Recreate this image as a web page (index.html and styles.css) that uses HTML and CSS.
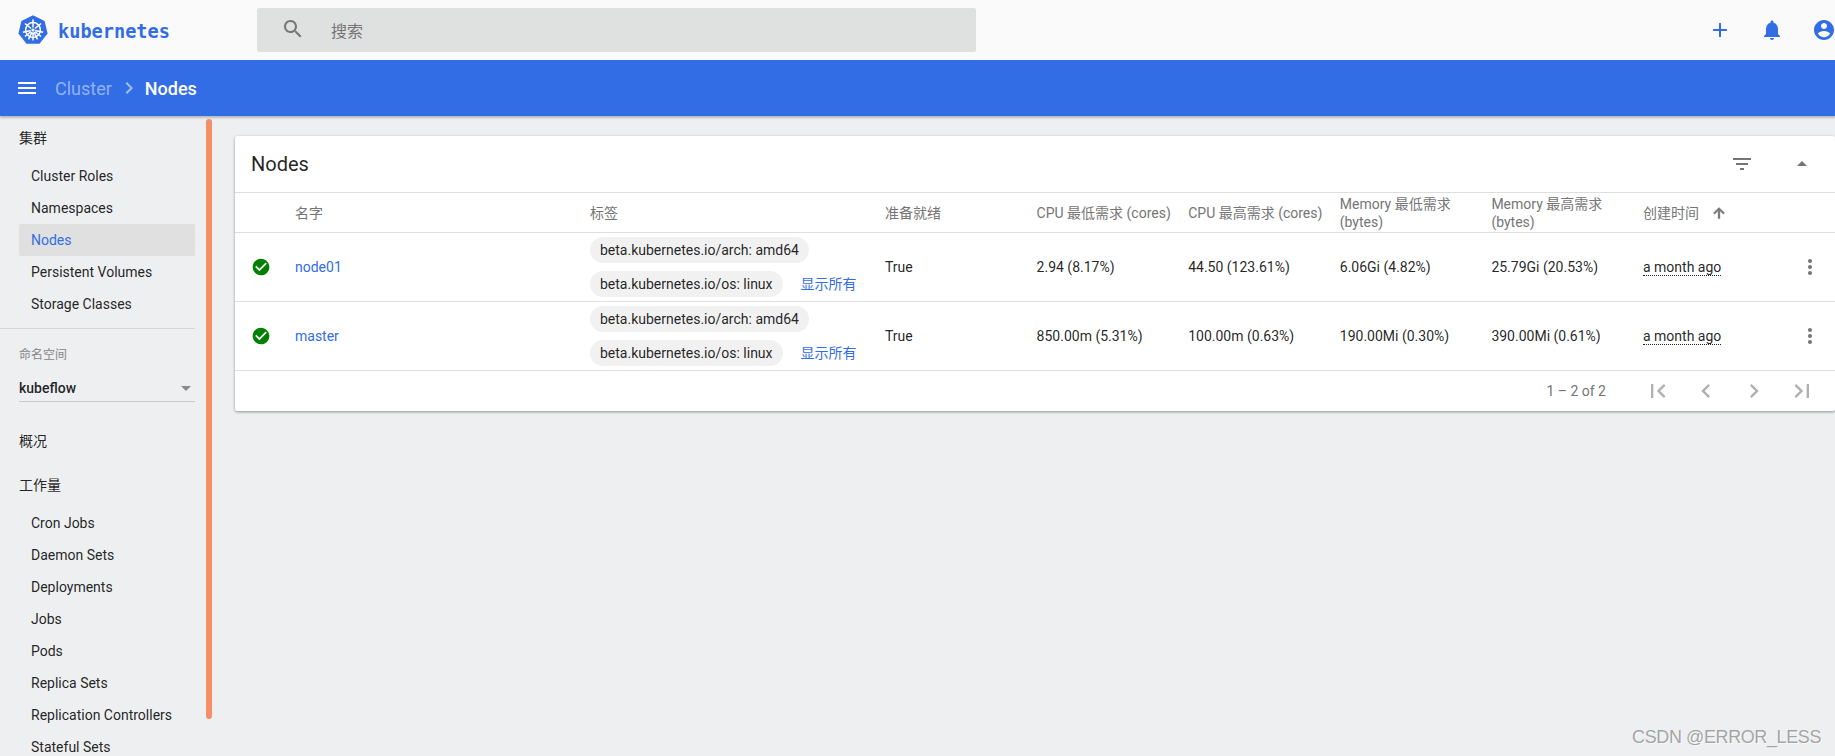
FILE: index.html
```html
<!DOCTYPE html>
<html lang="zh">
<head>
<meta charset="utf-8">
<title>Nodes - Kubernetes Dashboard</title>
<link rel="stylesheet" href="styles.css">
</head>
<body>
<header class="toolbar">
  <div class="brand">
    <svg class="logo" viewBox="0 0 30 30">
      <path class="logo-hept" d="M15 .3 26.6 5.9 29.6 18.5 21.5 28.8H8.5L.4 18.5 3.4 5.9Z"/>
      <g class="logo-wheel">
        <circle cx="15" cy="15" r="7.4"/>
        <path d="M15 4.6V12.6M15 17.4V25.4M6.9 8.5 13.1 13.5M16.9 16.5 23.1 21.5M23.1 8.5 16.9 13.5M13.1 16.5 6.9 21.5M4.9 17.3 12.7 15.5M17.3 15.5 25.1 17.3M10.5 24.4 14 17.2M16 17.2 19.5 24.4"/>
        <circle class="logo-hub" cx="15" cy="15" r="1.6"/>
      </g>
    </svg>
    <span class="brand-name">kubernetes</span>
  </div>
  <div class="search">
    <svg class="icon icon-search" viewBox="0 0 24 24"><path d="M15.5 14h-.79l-.28-.27C15.41 12.59 16 11.11 16 9.5 16 5.91 13.09 3 9.5 3S3 5.91 3 9.5 5.91 16 9.5 16c1.61 0 3.09-.59 4.23-1.57l.27.28v.79l5 4.99L20.49 19l-4.99-5zm-6 0C7.01 14 5 11.99 5 9.5S7.01 5 9.5 5 14 7.01 14 9.5 11.99 14 9.5 14z"/></svg>
    <span class="search-text">搜索</span>
  </div>
  <div class="actions">
    <svg class="icon" viewBox="0 0 24 24"><path d="M19 13h-6v6h-2v-6H5v-2h6V5h2v6h6v2z"/></svg>
    <svg class="icon" viewBox="0 0 24 24"><path d="M12 22c1.1 0 2-.9 2-2h-4c0 1.1.89 2 2 2zm6-6v-5c0-3.07-1.64-5.64-4.5-6.32V4c0-.83-.67-1.5-1.5-1.5s-1.5.67-1.5 1.5v.68C7.63 5.36 6 7.92 6 11v5l-2 2v1h16v-1l-2-2z"/></svg>
    <svg class="icon" viewBox="0 0 24 24"><path d="M12 2C6.48 2 2 6.48 2 12s4.48 10 10 10 10-4.48 10-10S17.52 2 12 2zm0 3c1.66 0 3 1.34 3 3s-1.34 3-3 3-3-1.34-3-3 1.34-3 3-3zm0 14.2c-2.5 0-4.71-1.28-6-3.22.03-1.99 4-3.08 6-3.08 1.99 0 5.97 1.09 6 3.08-1.29 1.94-3.5 3.22-6 3.22z"/></svg>
  </div>
</header>

<div class="crumbbar">
  <svg class="icon icon-menu" viewBox="0 0 24 24"><path d="M3 18h18v-2H3v2zm0-5h18v-2H3v2zm0-7v2h18V6H3z"/></svg>
  <span class="crumb-parent">Cluster</span>
  <svg class="icon icon-chevron" viewBox="0 0 24 24"><path d="M10 6L8.59 7.41 13.17 12l-4.58 4.59L10 18l6-6z"/></svg>
  <span class="crumb-current">Nodes</span>
</div>

<div class="main">
  <nav class="sidebar">
    <div class="scrollthumb"></div>
    <div class="nav-title">集群</div>
    <a class="nav-item">Cluster Roles</a>
    <a class="nav-item">Namespaces</a>
    <a class="nav-item nav-active">Nodes</a>
    <a class="nav-item">Persistent Volumes</a>
    <a class="nav-item">Storage Classes</a>
    <div class="nav-divider"></div>
    <div class="ns-label">命名空间</div>
    <div class="ns-select">
      <span>kubeflow</span>
      <span class="ns-caret"></span>
    </div>
    <div class="nav-title">概况</div>
    <div class="nav-title">工作量</div>
    <a class="nav-item">Cron Jobs</a>
    <a class="nav-item">Daemon Sets</a>
    <a class="nav-item">Deployments</a>
    <a class="nav-item">Jobs</a>
    <a class="nav-item">Pods</a>
    <a class="nav-item">Replica Sets</a>
    <a class="nav-item">Replication Controllers</a>
    <a class="nav-item">Stateful Sets</a>
  </nav>

  <main class="content">
    <section class="card">
      <div class="card-head">
        <h1 class="card-title">Nodes</h1>
        <svg class="icon icon-grey" viewBox="0 0 24 24"><path d="M10 18h4v-2h-4v2zM3 6v2h18V6H3zm3 7h12v-2H6v2z"/></svg>
        <svg class="icon icon-grey icon-collapse" viewBox="0 0 24 24"><path d="M7 14l5-5 5 5z"/></svg>
      </div>
      <table class="table">
        <colgroup>
          <col class="c-status"><col class="c-wide"><col class="c-wide">
          <col class="c-num"><col class="c-num"><col class="c-num"><col class="c-num"><col class="c-num">
          <col class="c-age"><col>
        </colgroup>
        <thead>
          <tr>
            <th></th>
            <th>名字</th>
            <th>标签</th>
            <th>准备就绪</th>
            <th>CPU 最低需求 (cores)</th>
            <th>CPU 最高需求 (cores)</th>
            <th>Memory 最低需求 (bytes)</th>
            <th>Memory 最高需求 (bytes)</th>
            <th colspan="2">
              <span class="sorted">创建时间
                <svg class="icon-sort" viewBox="0 0 24 24"><path d="M4 12l1.41 1.41L11 7.83V20h2V7.83l5.58 5.59L20 12l-8-8-8 8z"/></svg>
              </span>
            </th>
          </tr>
        </thead>
        <tbody>
          <tr>
            <td class="cell-status"><svg class="icon-ok" viewBox="0 0 24 24"><circle class="ok-bg" cx="12" cy="12" r="7"/><path d="M12 2C6.48 2 2 6.48 2 12s4.48 10 10 10 10-4.48 10-10S17.52 2 12 2zm-2 15l-5-5 1.41-1.41L10 14.17l7.59-7.59L19 8l-9 9z"/></svg></td>
            <td><a class="link">node01</a></td>
            <td>
              <div class="chips">
                <span class="chip">beta.kubernetes.io/arch: amd64</span>
                <div class="chip-row"><span class="chip">beta.kubernetes.io/os: linux</span><a class="link link-more">显示所有</a></div>
              </div>
            </td>
            <td>True</td>
            <td>2.94 (8.17%)</td>
            <td>44.50 (123.61%)</td>
            <td>6.06Gi (4.82%)</td>
            <td>25.79Gi (20.53%)</td>
            <td><span class="age">a month ago</span></td>
            <td class="cell-more"><svg class="icon icon-grey" viewBox="0 0 24 24"><path d="M12 8c1.1 0 2-.9 2-2s-.9-2-2-2-2 .9-2 2 .9 2 2 2zm0 2c-1.1 0-2 .9-2 2s.9 2 2 2 2-.9 2-2-.9-2-2-2zm0 6c-1.1 0-2 .9-2 2s.9 2 2 2 2-.9 2-2-.9-2-2-2z"/></svg></td>
          </tr>
          <tr>
            <td class="cell-status"><svg class="icon-ok" viewBox="0 0 24 24"><circle class="ok-bg" cx="12" cy="12" r="7"/><path d="M12 2C6.48 2 2 6.48 2 12s4.48 10 10 10 10-4.48 10-10S17.52 2 12 2zm-2 15l-5-5 1.41-1.41L10 14.17l7.59-7.59L19 8l-9 9z"/></svg></td>
            <td><a class="link">master</a></td>
            <td>
              <div class="chips">
                <span class="chip">beta.kubernetes.io/arch: amd64</span>
                <div class="chip-row"><span class="chip">beta.kubernetes.io/os: linux</span><a class="link link-more">显示所有</a></div>
              </div>
            </td>
            <td>True</td>
            <td>850.00m (5.31%)</td>
            <td>100.00m (0.63%)</td>
            <td>190.00Mi (0.30%)</td>
            <td>390.00Mi (0.61%)</td>
            <td><span class="age">a month ago</span></td>
            <td class="cell-more"><svg class="icon icon-grey" viewBox="0 0 24 24"><path d="M12 8c1.1 0 2-.9 2-2s-.9-2-2-2-2 .9-2 2 .9 2 2 2zm0 2c-1.1 0-2 .9-2 2s.9 2 2 2 2-.9 2-2-.9-2-2-2zm0 6c-1.1 0-2 .9-2 2s.9 2 2 2 2-.9 2-2-.9-2-2-2z"/></svg></td>
          </tr>
        </tbody>
      </table>
      <div class="pager">
        <span class="pager-range">1 – 2 of 2</span>
        <span class="pager-btn"><svg class="icon icon-pager" viewBox="0 0 24 24"><path d="M18.41 16.59L13.82 12l4.59-4.59L17 6l-6 6 6 6zM6 6h2v12H6z"/></svg></span>
        <span class="pager-btn"><svg class="icon icon-pager" viewBox="0 0 24 24"><path d="M15.41 7.41L14 6l-6 6 6 6 1.41-1.41L10.83 12z"/></svg></span>
        <span class="pager-btn"><svg class="icon icon-pager" viewBox="0 0 24 24"><path d="M10 6L8.59 7.41 13.17 12l-4.58 4.59L10 18l6-6z"/></svg></span>
        <span class="pager-btn"><svg class="icon icon-pager" viewBox="0 0 24 24"><path d="M5.59 7.41L10.18 12l-4.59 4.59L7 18l6-6-6-6zM16 6h2v12h-2z"/></svg></span>
      </div>
    </section>
  </main>
</div>
<div class="watermark">CSDN @ERROR_LESS</div>
</body>
</html>
```

FILE: styles.css
```css
* { box-sizing: border-box; }
html, body { height: 100%; }
body {
  margin: 0;
  width: 1835px;
  height: 756px;
  overflow: hidden;
  display: flex;
  flex-direction: column;
  background: #edeff1;
  color: rgba(0, 0, 0, .87);
  font-family: Roboto, "Noto Sans CJK SC", sans-serif;
  font-size: 14px;
  position: relative;
}

.icon { width: 24px; height: 24px; flex: none; fill: #326de6; display: block; }

/* top toolbar */
.toolbar {
  height: 60px;
  flex: none;
  display: flex;
  align-items: center;
  background: #fafafa;
}
.brand { width: 257px; flex: none; display: flex; align-items: center; padding-left: 18px; }
.logo { width: 30px; height: 30px; flex: none; }
.logo-hept { fill: #326de6; }
.logo-wheel { fill: none; stroke: #fff; stroke-width: 1.5; }
.logo-hub { fill: #fff; stroke: none; }
.brand-name {
  margin-left: 10px;
  color: #326de6;
  font-family: "DejaVu Sans Mono", monospace;
  font-size: 18.6px;
  font-weight: 700;
  position: relative;
  top: 1px;
}
.search {
  width: 719px;
  height: 44px;
  flex: none;
  display: flex;
  align-items: center;
  padding-left: 24px;
  background: #dfe1e1;
  border-radius: 2px;
}
.icon-search { fill: #757575; position: relative; top: -1px; }
.search-text { margin-left: 26px; font-size: 16px; color: #757575; }
.actions {
  margin-left: auto;
  display: flex;
  gap: 28px;
  margin-right: -1px;
}

/* blue breadcrumb bar */
.crumbbar {
  height: 56px;
  flex: none;
  display: flex;
  align-items: center;
  padding-left: 15px;
  background: #326de6;
  color: #fff;
  font-size: 18px;
  box-shadow: 0 2px 2px rgba(0, 0, 0, .22);
  position: relative;
  z-index: 2;
}
.icon-menu { fill: #fff; }
.crumb-parent { margin-left: 16px; color: rgba(255, 255, 255, .48); }
.icon-chevron { fill: rgba(255, 255, 255, .55); margin: 0 4px 0 5px; }
.crumb-current { font-weight: 500; }

/* main */
.main { flex: 1; min-height: 0; display: flex; }
.sidebar {
  width: 219px;
  flex: none;
  padding-right: 24px;
  overflow: hidden;
  position: relative;
}
.scrollthumb {
  position: absolute;
  left: 206px;
  top: 3px;
  width: 6px;
  height: 600px;
  border-radius: 3px;
  background: #f58f67;
}
.nav-title {
  height: 44px;
  display: flex;
  align-items: center;
  padding: 0 0 2px 19px;
  color: rgba(0, 0, 0, .87);
}
.nav-item {
  height: 32px;
  margin-left: 19px;
  display: flex;
  align-items: center;
  padding-left: 12px;
  border-radius: 2px;
}
.nav-active { background: #e0e0e0; color: #326de6; }
.nav-divider { height: 1px; margin-top: 8px; background: #d4d5d7; }
.ns-label { margin: 18px 0 0 19px; height: 17px; line-height: 17px; font-size: 12px; color: #858585; }
.ns-select {
  margin: 8px 0 17px 19px;
  height: 30px;
  display: flex;
  align-items: center;
  justify-content: space-between;
  padding: 3px 4px 0 0;
  font-weight: 500;
  border-bottom: 1px solid #c9cacc;
}
.ns-caret {
  width: 0;
  height: 0;
  border-left: 5px solid transparent;
  border-right: 5px solid transparent;
  border-top: 5px solid #8a8a8a;
}

/* card */
.content { flex: 1; min-width: 0; padding: 20px 0 0 16px; }
.card {
  background: #fff;
  border-radius: 2px;
  box-shadow: 0 1px 3px rgba(0, 0, 0, .4);
}
.card-head {
  height: 57px;
  display: flex;
  align-items: center;
  padding: 0 21px 0 16px;
  gap: 36px;
  border-bottom: 1px solid #dedede;
}
.card-title { margin: 0 auto 0 0; font-size: 20px; font-weight: 400; }
.icon-grey { fill: #757575; }

.table { width: 100%; table-layout: fixed; border-collapse: separate; border-spacing: 0; }
.c-status { width: 60px; }
.c-wide { width: 295px; }
.c-num { width: 151.6px; }
.c-age { width: 142px; }
.table th {
  height: 40px;
  padding: 0 8px 0 0;
  text-align: left;
  font-weight: 400;
  line-height: 18px;
  color: #757575;
  border-bottom: 1px solid #dedede;
}
.table td {
  height: 69px;
  padding: 0 8px 0 0;
  border-bottom: 1px solid #dedede;
}
.cell-status { padding-left: 16px !important; }
.cell-more { padding: 0 !important; }
.cell-more .icon { margin-left: 13px; }
.icon-ok { display: block; width: 20px; height: 20px; fill: #008000; }
.ok-bg { fill: #fff; }
.sorted { display: flex; align-items: center; gap: 12px; }
.icon-sort { width: 16px; height: 16px; fill: #757575; stroke: #757575; stroke-width: 1.5; flex: none; }
.link { color: #326de6; }
.link-more { padding-bottom: 2px; }
.chips { display: flex; flex-direction: column; align-items: flex-start; gap: 8px; }
.chip {
  display: inline-flex;
  align-items: center;
  height: 26px;
  padding: 0 10px;
  border-radius: 13px;
  background: #f1f1f1;
  white-space: nowrap;
}
.chip-row { display: flex; align-items: center; gap: 18px; white-space: nowrap; }
.age { border-bottom: 1px dotted rgba(0, 0, 0, .87); }

.pager {
  height: 40px;
  display: flex;
  align-items: center;
  justify-content: flex-end;
  padding-right: 9px;
}
.pager-range { margin-right: 28px; color: #757575; }
.pager-btn { width: 48px; display: flex; justify-content: center; }
.icon-pager { width: 28px; height: 28px; fill: #b0b0b0; }

.watermark {
  position: absolute;
  right: 14px;
  bottom: 8px;
  color: rgba(110, 110, 110, .6);
  font-family: "Liberation Sans", sans-serif;
  font-size: 18px;
  letter-spacing: -.4px;
  text-shadow: 1px 1px 0 rgba(255, 255, 255, .6);
}
```
